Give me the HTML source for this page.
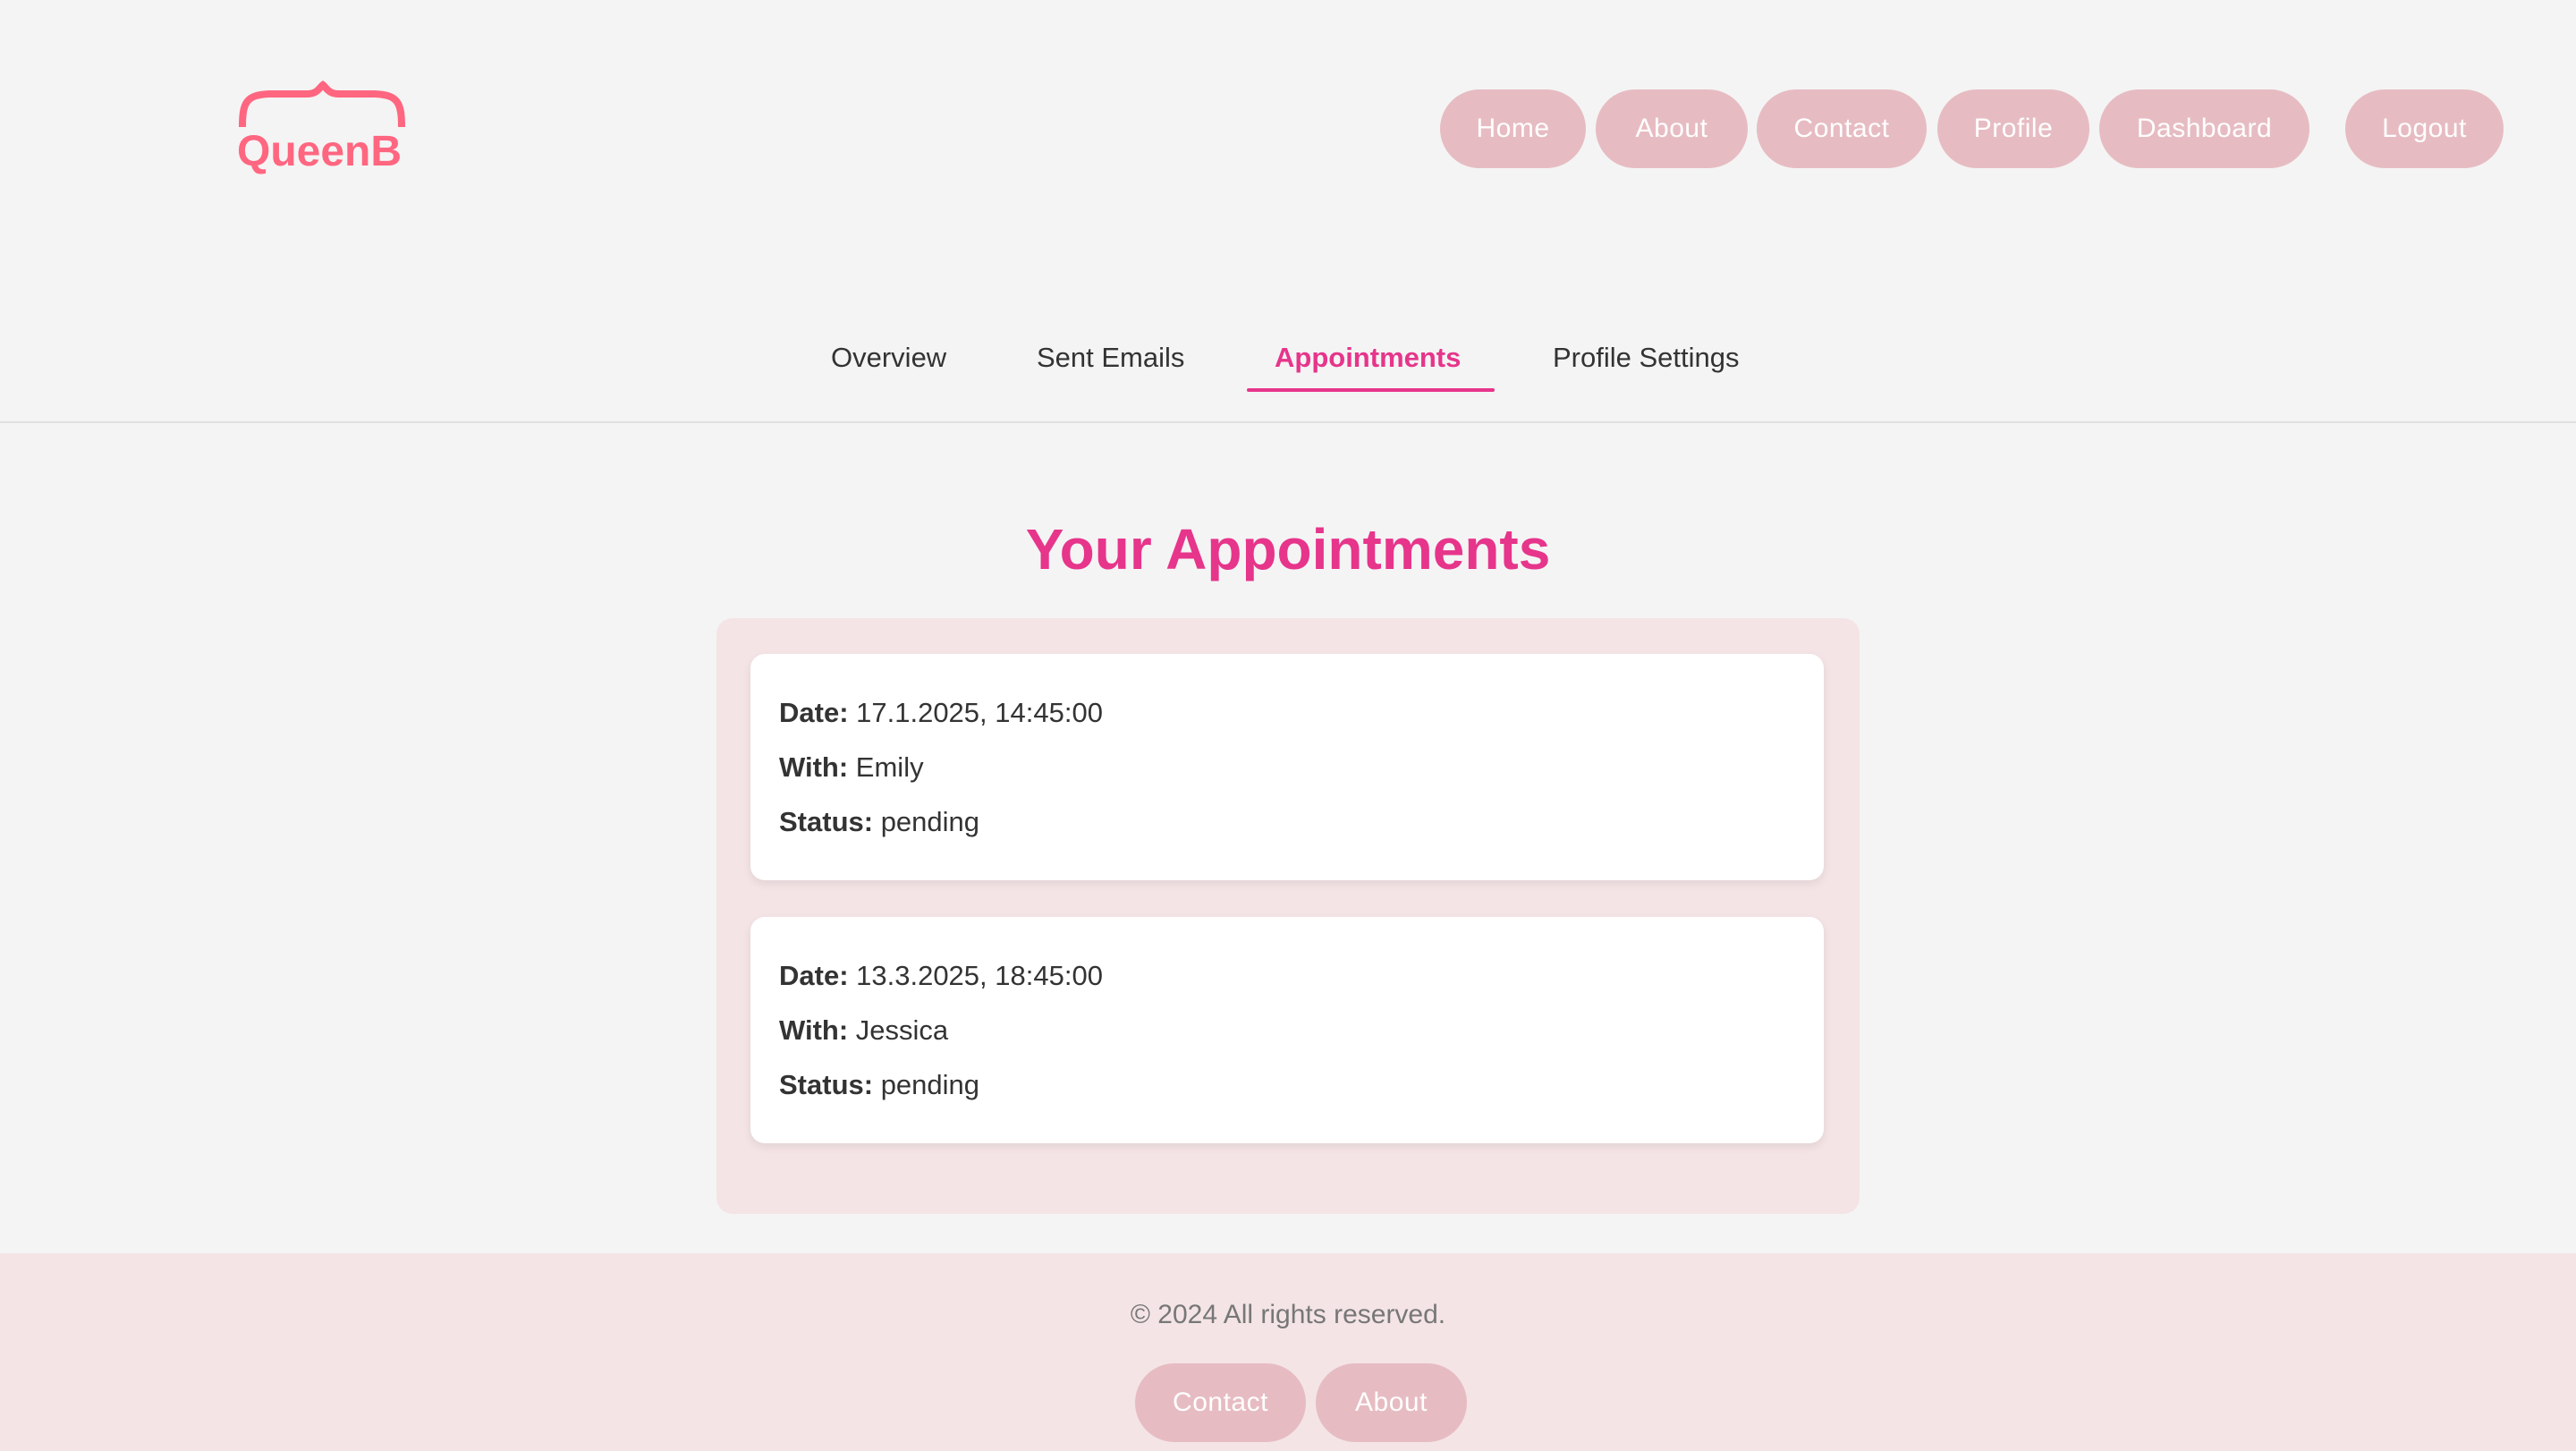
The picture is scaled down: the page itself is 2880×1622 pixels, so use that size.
<!DOCTYPE html>
<html><head><meta charset="utf-8"><style>
*{box-sizing:border-box;margin:0;padding:0}
body{width:2880px;height:1622px;background:#f4f4f4;font-family:"Liberation Sans",sans-serif;position:relative;overflow:hidden;color:#333}
.btn{position:absolute;height:88px;border-radius:44px;background:#e6bcc2;color:#fff;font-size:30px;display:flex;align-items:center;justify-content:center;letter-spacing:0.5px}
.tab{position:absolute;top:382px;font-size:31px;color:#333}
.line{position:absolute;left:0;right:0;top:471px;height:2px;background:#e0e0e0}
h1{position:absolute;left:0;width:2880px;text-align:center;top:577px;font-size:64px;color:#e6358b;font-weight:bold}
.box{position:absolute;left:801px;top:691px;width:1278px;height:666px;background:#f4e4e6;border-radius:18px}
.card{position:absolute;left:839px;width:1200px;height:253px;background:#fff;border-radius:16px;box-shadow:0 4px 10px rgba(0,0,0,0.08);font-size:31px;color:#333}
.card p{position:absolute;left:32px}
.foot{position:absolute;left:0;top:1401px;width:2880px;height:221px;background:#f4e4e6}
</style></head><body>
<div style="position:absolute;left:263px;top:90px;width:200px;height:110px">
<svg width="200" height="60" style="position:absolute;left:0;top:0"><path d="M8 52 C8 25 12 16 38 15 L80 15 C92 15 94 8 98 5 C102 8 104 15 116 15 L156 15 C182 16 186 25 186 52" fill="none" stroke="#ff6680" stroke-width="8"/></svg>
<span style="position:absolute;left:2px;top:52px;font-size:48px;font-weight:bold;color:#ff6680;letter-spacing:0px">QueenB</span>
</div>
<div class="btn" style="left:1610px;top:100px;width:163px">Home</div>
<div class="btn" style="left:1784px;top:100px;width:170px">About</div>
<div class="btn" style="left:1964px;top:100px;width:190px">Contact</div>
<div class="btn" style="left:2166px;top:100px;width:170px">Profile</div>
<div class="btn" style="left:2347px;top:100px;width:235px">Dashboard</div>
<div class="btn" style="left:2622px;top:100px;width:177px">Logout</div>
<div class="tab" style="left:929px">Overview</div>
<div class="tab" style="left:1159px">Sent Emails</div>
<div class="tab" style="left:1425px;color:#e6358b;font-weight:bold">Appointments</div>
<div style="position:absolute;left:1394px;top:434px;width:277px;height:4px;background:#e6358b;border-radius:2px"></div>
<div class="tab" style="left:1736px">Profile Settings</div>
<div class="line"></div>
<h1>Your Appointments</h1>
<div class="box"></div>
<div class="card" style="top:731px">
<p style="top:48px"><b>Date:</b> 17.1.2025, 14:45:00</p>
<p style="top:109px"><b>With:</b> Emily</p>
<p style="top:170px"><b>Status:</b> pending</p>
</div>
<div class="card" style="top:1025px">
<p style="top:48px"><b>Date:</b> 13.3.2025, 18:45:00</p>
<p style="top:109px"><b>With:</b> Jessica</p>
<p style="top:170px"><b>Status:</b> pending</p>
</div>
<div class="foot"></div>
<div style="position:absolute;left:0;width:2880px;top:1453px;text-align:center;font-size:30px;color:#777">© 2024 All rights reserved.</div>
<div class="btn" style="left:1269px;top:1524px;width:191px">Contact</div>
<div class="btn" style="left:1471px;top:1524px;width:169px">About</div>
</body></html>
